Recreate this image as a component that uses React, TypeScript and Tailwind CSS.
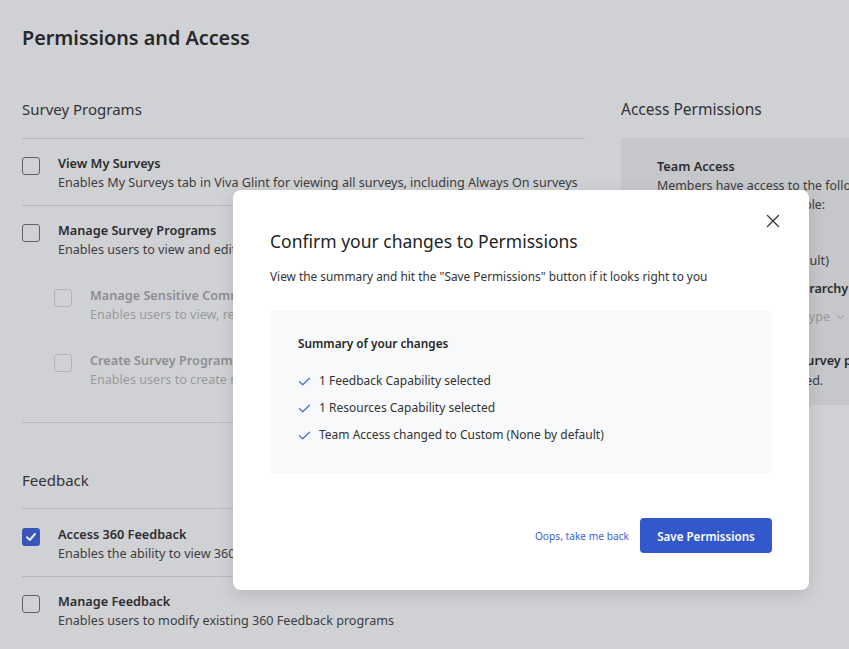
import React from "react";

const font = { fontFamily: '"Noto Sans", "Open Sans", Arial, sans-serif' };

function Box({ checked = false, disabled = false }: { checked?: boolean; disabled?: boolean }) {
  if (checked) {
    return (
      <div className="mt-[4px] flex h-[18px] w-[18px] shrink-0 items-center justify-center rounded-[3px] bg-[#3a55b8]">
        <svg width="12" height="12" viewBox="0 0 12 12" fill="none">
          <path d="M2 6.3 L4.8 9 L10 3" stroke="#e6e7ea" strokeWidth="2" strokeLinecap="round" strokeLinejoin="round" />
        </svg>
      </div>
    );
  }
  return (
    <div
      className={
        disabled
          ? "mt-[4px] h-[18px] w-[18px] shrink-0 rounded-[3px] border-[1.5px] border-[#b4b5b8]"
          : "mt-[4px] h-[18px] w-[18px] shrink-0 rounded-[3px] border-[1.5px] border-[#606164]"
      }
    />
  );
}

function Item({
  title,
  desc,
  checked,
  disabled,
}: {
  title: string;
  desc: string;
  checked?: boolean;
  disabled?: boolean;
}) {
  return (
    <div className="flex gap-[18px]">
      <Box checked={checked} disabled={disabled} />
      <div className="min-w-0 whitespace-nowrap">
        <div className={disabled ? "text-[12.7px] font-semibold leading-[20px] text-[#8d8e91]" : "text-[12.7px] font-semibold leading-[20px] text-[#2b2c2e]"}>
          {title}
        </div>
        <div className={disabled ? "text-[12.6px] leading-[19px] text-[#999a9d]" : "text-[12.6px] leading-[19px] text-[#3c3d40]"}>{desc}</div>
      </div>
    </div>
  );
}

function Check() {
  return (
    <svg width="13" height="13" viewBox="0 0 13 13" fill="none" className="shrink-0">
      <path d="M1.5 6.8 L4.7 9.8 L11.5 3.2" stroke="#4a6fd6" strokeWidth="1.3" strokeLinecap="round" strokeLinejoin="round" />
    </svg>
  );
}

export default function App() {
  return (
    <div style={font} className="relative h-[649px] w-[849px] overflow-hidden bg-[#d0d1d5]">
      <div className="pl-[22px] pt-[24px]">
        <h1 className="text-[19.8px] font-semibold leading-[28px] text-[#28292b]">Permissions and Access</h1>
        <div className="mt-[45px] flex gap-[36px]">
          {/* Left column */}
          <div className="w-[563px] shrink-0">
            <div className="border-b border-[#b9babd] pb-[17px] text-[15px] leading-[24px] text-[#323336]">Survey Programs</div>
            <div className="overflow-hidden border-b border-[#b9babd] pb-[13px] pt-[14px]">
              <Item title="View My Surveys" desc="Enables My Surveys tab in Viva Glint for viewing all surveys, including Always On surveys" />
            </div>
            <div className="overflow-hidden border-b border-[#b9babd] pb-[33px] pt-[14px]">
              <Item title="Manage Survey Programs" desc="Enables users to view and edit existing survey programs and their settings" />
              <div className="mt-[26px] pl-[32px]">
                <Item disabled title="Manage Sensitive Comments" desc="Enables users to view, report and redact sensitive comments" />
              </div>
              <div className="mt-[26px] pl-[32px]">
                <Item disabled title="Create Survey Programs" desc="Enables users to create new survey programs" />
              </div>
            </div>
            <div className="mt-[45px] border-b border-[#b9babd] pb-[16px] text-[15px] leading-[24px] text-[#323336]">Feedback</div>
            <div className="overflow-hidden border-b border-[#b9babd] pb-[13px] pt-[15px]">
              <Item checked title="Access 360 Feedback" desc="Enables the ability to view 360 Feedback programs and reports" />
            </div>
            <div className="overflow-hidden pt-[14px]">
              <Item title="Manage Feedback" desc="Enables users to modify existing 360 Feedback programs" />
            </div>
          </div>
          {/* Right column */}
          <div className="w-[300px] shrink-0">
            <div className="pb-[17px] text-[15.5px] leading-[24px] text-[#323336]">Access Permissions</div>
            <div className="h-[267px] bg-[#c6c7cb] pl-[36px] pt-[18px] text-[12.6px] text-[#3c3d40]">
              <div className="text-[12.7px] font-semibold leading-[20px] text-[#2b2c2e]">Team Access</div>
              <div className="whitespace-nowrap text-[12.4px] leading-[19px]">
                Members have access to the following
                <br />
                people on their team by role:
              </div>
              <div className="mt-[37px] flex items-center gap-[5px] whitespace-nowrap leading-[20px]">
                <div className="h-[16px] w-[16px] rounded-full border border-[#606164]" />
                <span>Custom (None by default)</span>
              </div>
              <div className="mt-[8px] whitespace-nowrap pl-[30px] font-semibold leading-[20px] text-[#2b2c2e]">Direct Reports + Hierarchy</div>
              <div className="mt-[8px] flex items-center gap-[6px] whitespace-nowrap pl-[40px] leading-[20px] text-[#97989b]">
                <span>Select a hierarchy type</span>
                <svg width="9" height="6" viewBox="0 0 9 6" fill="none">
                  <path d="M1 1 L4.5 4.5 L8 1" stroke="#97989b" strokeWidth="1" />
                </svg>
              </div>
              <div className="mt-[24px] whitespace-nowrap font-semibold leading-[20px] text-[#2b2c2e]">View results from both Survey programs</div>
              <div className="whitespace-nowrap leading-[19px]">No programs were selected.</div>
            </div>
          </div>
        </div>
      </div>

      {/* Modal */}
      <div className="absolute left-[233px] top-[190px] h-[400px] w-[576px] rounded-[8px] bg-white px-[37px] pt-[39px] shadow-[0_4px_16px_rgba(0,0,0,0.12)]">
        <button className="absolute right-[29px] top-[24px] flex h-[14px] w-[14px] items-center justify-center">
          <svg width="14" height="14" viewBox="0 0 14 14" fill="none">
            <path d="M1.5 1.5 L12.5 12.5 M12.5 1.5 L1.5 12.5" stroke="#333" strokeWidth="1.3" strokeLinecap="round" />
          </svg>
        </button>
        <h2 className="text-[17.5px] leading-[24px] text-[#242424]">Confirm your changes to Permissions</h2>
        <p className="mt-[15px] text-[11.85px] leading-[16px] text-[#333]">
          View the summary and hit the "Save Permissions" button if it looks right to you
        </p>
        <div className="mt-[27px] h-[162px] bg-[#f8f9fa] pl-[28px] pt-[22px]">
          <div className="text-[11.8px] font-semibold leading-[20px] text-[#262626]">Summary of your changes</div>
          <ul className="mt-[18px] flex flex-col gap-[7px] text-[12px] leading-[20px] text-[#333]">
            <li className="flex items-center gap-[8px]">
              <Check />1 Feedback Capability selected
            </li>
            <li className="flex items-center gap-[8px]">
              <Check />1 Resources Capability selected
            </li>
            <li className="flex items-center gap-[8px]">
              <Check />Team Access changed to Custom (None by default)
            </li>
          </ul>
        </div>
        <div className="mt-[45px] flex items-center justify-end gap-[11px]">
          <button className="pt-[2px] text-[10.2px] text-[#3b63d4]">Oops, take me back</button>
          <button className="h-[35px] w-[132px] rounded-[4px] bg-[#3358cc] pt-[2px] text-[11.6px] font-semibold text-white">
            Save Permissions
          </button>
        </div>
      </div>
    </div>
  );
}
